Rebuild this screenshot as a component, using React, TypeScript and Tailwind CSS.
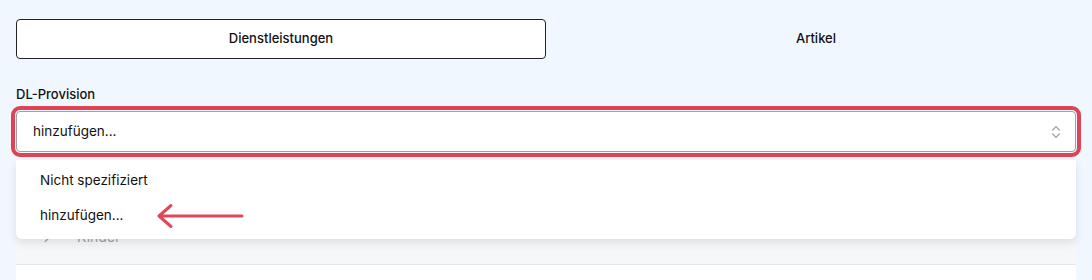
import { ChevronRight, ChevronsUpDown } from "lucide-react";

const font = { fontFamily: "Inter, 'Noto Sans', sans-serif" };

function Tabs() {
  return (
    <div className="grid grid-cols-2">
      <button className="h-[40px] rounded-[4px] border border-[#1f2328] bg-white text-[13px] font-[450] text-[#111]">
        Dienstleistungen
      </button>
      <button className="h-[40px] pl-[10px] text-[13px] font-[450] text-[#111]">Artikel</button>
    </div>
  );
}

function ArrowLeft() {
  return (
    <svg width="92" height="26" viewBox="0 0 92 26" className="text-[#e0485a]">
      <path
        d="M5 13 H88 M17 2.5 L5 13 L17 23.5"
        fill="none"
        stroke="currentColor"
        strokeWidth="3"
        strokeLinecap="round"
        strokeLinejoin="round"
      />
    </svg>
  );
}

export default function App() {
  return (
    <div className="h-[280px] w-full overflow-hidden bg-[#f1f7fe] px-4 pt-[19px]" style={font}>
      <Tabs />

      <div className="mt-[25px] text-[13px] font-medium leading-[20px] text-[#111]">DL-Provision</div>

      <div className="relative mt-[7px]">
        <div className="flex h-[41px] items-center justify-between rounded-[4px] border border-[#9ca0aa] bg-white pl-[16px] pr-[11px] text-[13.5px] text-[#111] outline-4 outline-offset-1 outline-[#dd4557]">
          <span>hinzufügen...</span>
          <ChevronsUpDown size={16} strokeWidth={1.8} className="text-[#9aa0aa]" />
        </div>

        {/* page content behind the open list */}
        <div className="mt-[8px] bg-white">
          <div className="h-[78px] bg-[#f6f7f9]" />
          <div className="flex h-[27px] items-start gap-[23px] border-b border-[#e5e7eb] bg-[#f6f7f9] pl-[24px] text-[14px] text-[#9ca3af]">
            <ChevronRight size={14} className="mt-[-7px]" />
            <span className="mt-[-12px]">Kinder</span>
          </div>
          <div className="h-[20px] bg-white" />
        </div>

        <div className="absolute left-0 right-0 top-[49px] rounded-b-[6px] bg-white pb-[6px] pt-[3px] text-[13.5px] text-[#111] shadow-[0_4px_10px_rgba(0,0,0,0.10)]">
          <div className="flex h-[35px] items-center px-6">Nicht spezifiziert</div>
          <div className="flex h-[35px] items-center gap-[31px] pl-6">
            <span>hinzufügen...</span>
            <ArrowLeft />
          </div>
        </div>
      </div>
    </div>
  );
}
